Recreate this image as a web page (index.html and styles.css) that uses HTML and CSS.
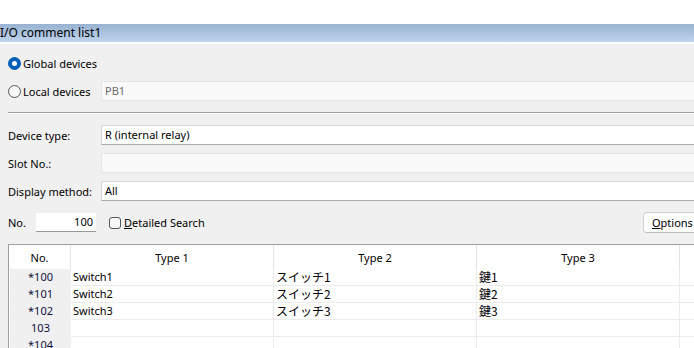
FILE: index.html
```html
<!DOCTYPE html>
<html>
<head>
<meta charset="utf-8">
<link rel="stylesheet" href="styles.css">
</head>
<body>
<div class="top-gap"></div>
<div class="titlebar">I/O comment list1</div>
<div class="gapline"></div>
<div class="panel">
  <div class="row radio-row first">
    <span class="radio checked"></span><span class="lbl">Global devices</span>
  </div>
  <div class="row field-row">
    <div class="label radio-label"><span class="radio"></span><span class="lbl">Local devices</span></div>
    <div class="input disabled grey-text">PB1</div>
  </div>
  <div class="separator"></div>
  <div class="row field-row first-field">
    <div class="label">Device type:</div>
    <div class="input">R (internal relay)</div>
  </div>
  <div class="row field-row">
    <div class="label">Slot No.:</div>
    <div class="input disabled"></div>
  </div>
  <div class="row field-row">
    <div class="label">Display method:</div>
    <div class="input">All</div>
  </div>
  <div class="row search-row">
    <span class="no-label">No.</span>
    <span class="num-input">100</span>
    <span class="checkbox"></span>
    <span class="lbl"><u>D</u>etailed Search</span>
    <span class="spacer"></span>
    <span class="button"><u>O</u>ptions</span>
  </div>
  <div class="grid-wrap">
    <table class="grid">
      <thead>
        <tr>
          <th class="c-no"><span>No.</span></th>
          <th class="c-t"><span>Type 1</span></th>
          <th class="c-t"><span>Type 2</span></th>
          <th class="c-t"><span>Type 3</span></th>
          <th class="c-x"><span></span></th>
        </tr>
      </thead>
      <tbody>
        <tr><td class="no">*100</td><td>Switch1</td><td class="jp">スイッチ1</td><td class="jp">鍵1</td><td></td></tr>
        <tr><td class="no">*101</td><td>Switch2</td><td class="jp">スイッチ2</td><td class="jp">鍵2</td><td></td></tr>
        <tr><td class="no">*102</td><td>Switch3</td><td class="jp">スイッチ3</td><td class="jp">鍵3</td><td></td></tr>
        <tr><td class="no">103</td><td></td><td></td><td></td><td></td></tr>
        <tr><td class="no">*104</td><td></td><td></td><td></td><td></td></tr>
      </tbody>
    </table>
  </div>
</div>
</body>
</html>
```
FILE: styles.css
```css
html, body {
  margin: 0;
  padding: 0;
  background: #ffffff;
  overflow: hidden;
  width: 694px;
  height: 348px;
}
body {
  font-family: "Noto Sans", "Noto Sans CJK JP", sans-serif;
  font-size: 11px;
  color: #000;
}
.top-gap { height: 24px; background: #fff; }
.titlebar {
  height: 18px;
  line-height: 18px;
  background: linear-gradient(#98b2d0, #bed3ed);
  font-size: 12px;
  padding-left: 0;
  white-space: nowrap;
}
.gapline { height: 2px; background: #fff; }
.panel {
  background: #f0f0f0;
  width: 760px;
  padding-left: 8px;
  height: 320px;
}
.row {
  display: flex;
  align-items: center;
  white-space: nowrap;
}
.radio-row {
  height: 20px;
  padding-top: 9px;
}
.field-row {
  height: 20px;
  margin-top: 8px;
}
.first-field { margin-top: 11px; }
.label {
  width: 93px;
  flex: none;
  display: flex;
  align-items: center;
}
.radio {
  width: 13px;
  height: 13px;
  box-sizing: border-box;
  border-radius: 50%;
  border: 1px solid #555;
  background: #f7f7f7;
  margin-right: 2px;
  flex: none;
  position: relative;
}
.radio.checked {
  background: #005fb8;
  border-color: #005fb8;
}
.radio.checked::after {
  content: "";
  position: absolute;
  left: 3px;
  top: 3px;
  width: 5px;
  height: 5px;
  border-radius: 50%;
  background: #fff;
}
.input {
  flex: 1;
  height: 20px;
  box-sizing: border-box;
  background: #fff;
  border: 1px solid #d6d6d6;
  border-bottom-color: #aaa;
  padding-left: 3px;
  line-height: 18px;
}
.input.disabled {
  background: #f9f9f9;
  border-color: #e5e5e5;
}
.grey-text { color: #6d6d6d; }
.separator {
  margin-top: 11px;
  height: 0;
  border-top: 1px solid #a0a0a0;
  border-bottom: 1px solid #fafafa;
  width: 700px;
}
.search-row {
  height: 19px;
  margin-top: 12px;
  width: 686px;
}
.no-label { width: 28px; flex: none; }
.num-input {
  width: 60px;
  height: 19px;
  box-sizing: border-box;
  background: #fff;
  border-bottom: 1px solid #999;
  text-align: right;
  padding-right: 3px;
  line-height: 18px;
  flex: none;
}
.checkbox {
  width: 12px;
  height: 12px;
  box-sizing: border-box;
  border: 1px solid #555;
  border-radius: 3px;
  background: #f7f7f7;
  margin-left: 13px;
  margin-right: 3px;
  flex: none;
}
.spacer { flex: 1; }
.button {
  height: 21px;
  box-sizing: border-box;
  border: 1px solid #d0d0d0;
  border-bottom-color: #bdbdbd;
  border-radius: 4px;
  background: #fdfdfd;
  line-height: 19px;
  padding: 0 6px 0 8px;
  width: 60px;
  margin-right: -9px;
  flex: none;
}
.grid-wrap {
  margin-top: 12px;
  border-top: 1px solid #a0a0a0;
  border-left: 1px solid #a0a0a0;
  background: #fff;
  height: 120px;
}
.grid {
  border-collapse: collapse;
  table-layout: fixed;
  width: 760px;
}
.grid th {
  height: 24px;
  padding: 0;
  font-weight: normal;
  text-align: center;
  position: relative;
  border-right: 1px solid #e3e3e3;
}
.grid th.c-no { width: 61px; }
.grid th.c-t { width: 202px; }
.grid td {
  height: 16px;
  padding: 0 0 0 2px;
  border-bottom: 1px solid #ececec;
  border-right: 1px solid #ececec;
  line-height: 16px;
  white-space: nowrap;
  overflow: hidden;
}
.grid td.no {
  background: #f0f0f0;
  text-align: center;
  border-bottom-color: #f0f0f0;
  border-right-color: #f0f0f0;
  box-shadow: inset 1px 0 0 #fff;
  color: #101040;
}
.grid td.jp { font-family: "Noto Sans CJK JP", sans-serif; font-size: 12px; }
```
